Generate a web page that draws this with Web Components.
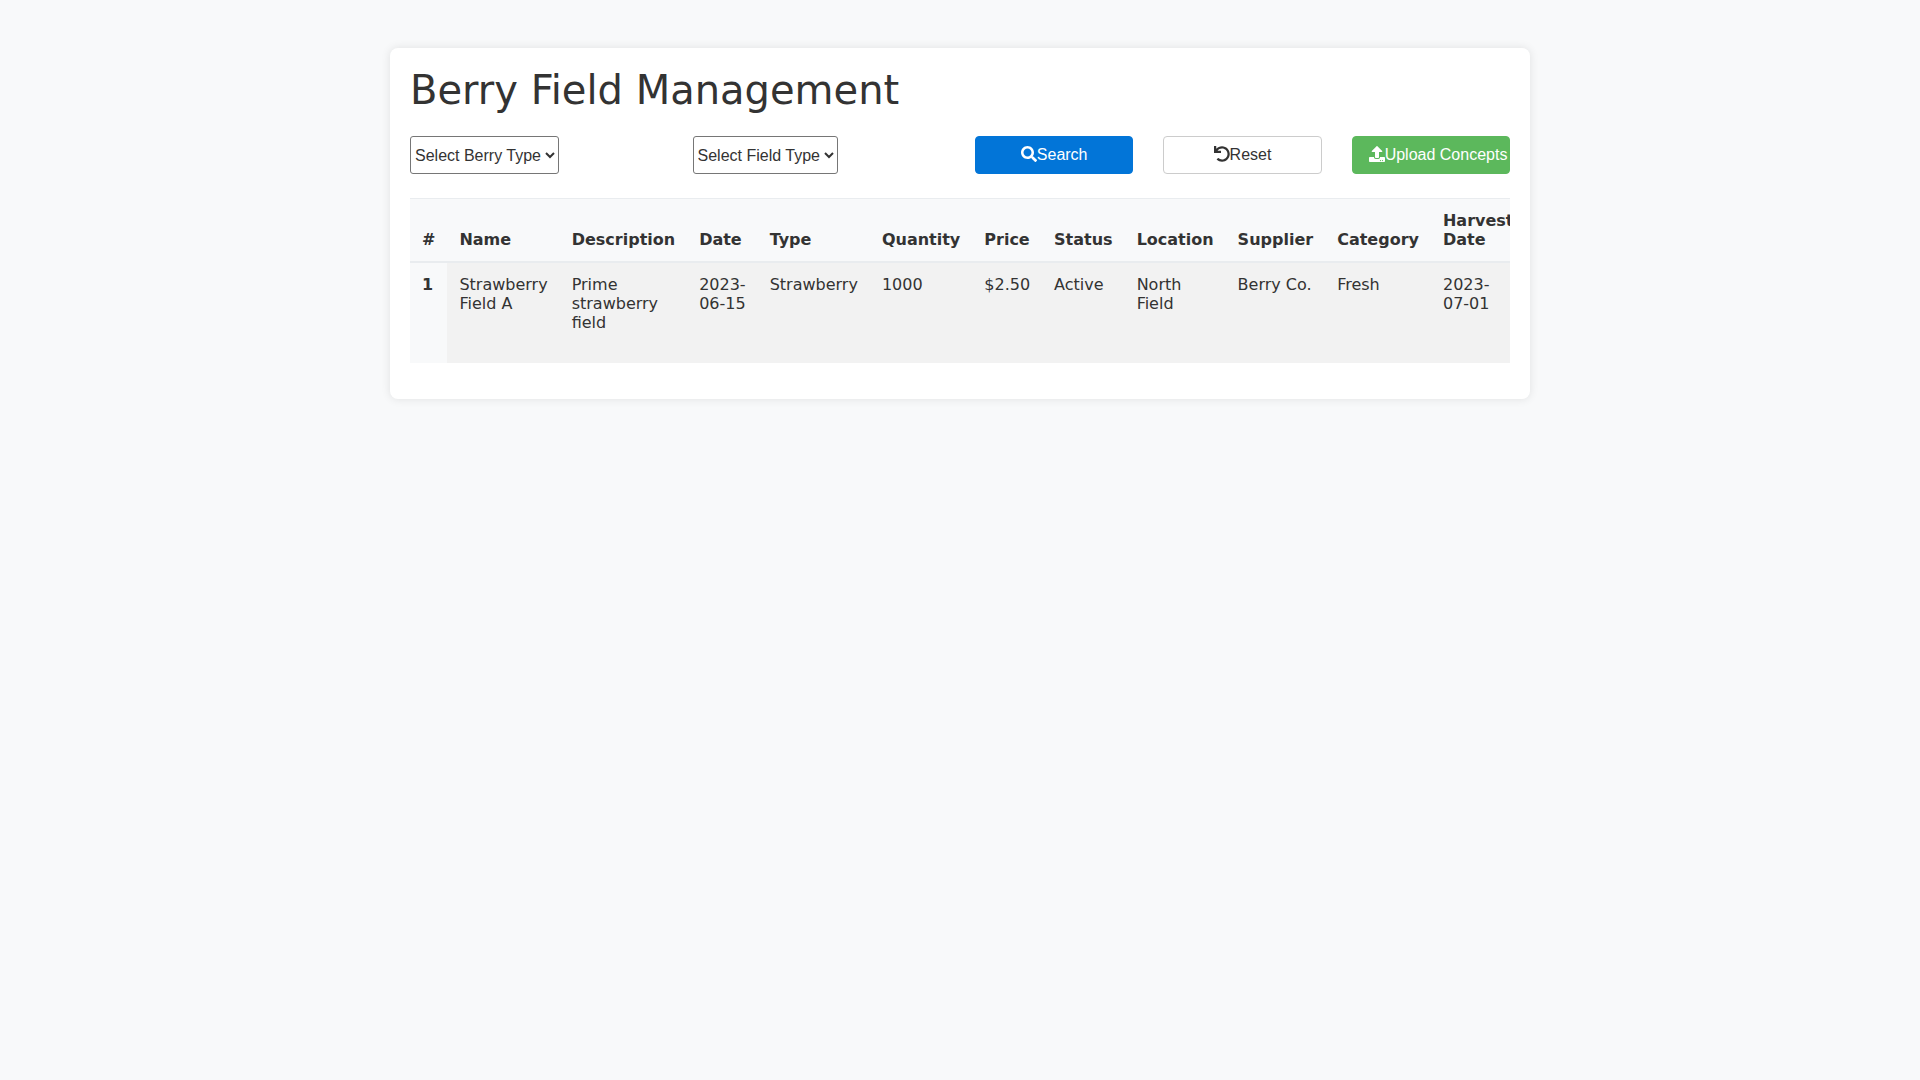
<!DOCTYPE html>
<html lang="en">
<head>
<meta charset="utf-8">
<title>Berry Field Management</title>
<style>
    html, body { margin: 0; padding: 0; }
    body {
        background: #f8f9fa;
        color: #333;
        font-family: "DejaVu Sans", sans-serif;
        font-size: 16px;
        min-height: 1080px;
    }
</style>
</head>
<body>
<field-page>
    <page-title>Berry Field Management</page-title>
    <filter-bar>
        <filter-select label="Select Berry Type"></filter-select>
        <filter-select label="Select Field Type"></filter-select>
        <action-button kind="primary" icon="search">Search</action-button>
        <action-button kind="plain" icon="undo">Reset</action-button>
        <action-button kind="success" icon="upload">Upload Concepts</action-button>
    </filter-bar>
    <field-table></field-table>
</field-page>

<script>
const ICONS = {
    search: { box: '0 0 512 512', d: 'M505 442.7L405.3 343c-4.5-4.5-10.6-7-17-7H372c27.6-35.3 44-79.7 44-128C416 93.1 322.9 0 208 0S0 93.1 0 208s93.1 208 208 208c48.3 0 92.7-16.4 128-44v16.3c0 6.4 2.5 12.5 7 17l99.7 99.7c9.4 9.4 24.6 9.4 33.9 0l28.3-28.3c9.4-9.4 9.4-24.6.1-34zM208 336c-70.7 0-128-57.2-128-128 0-70.7 57.2-128 128-128 70.7 0 128 57.2 128 128 0 70.7-57.2 128-128 128z' },
    undo: { box: '0 0 512 512', d: 'M212.333 224.333H12c-6.627 0-12-5.373-12-12V12C0 5.373 5.373 0 12 0h48c6.627 0 12 5.373 12 12v78.112C117.773 39.279 184.26 7.47 258.175 8.007c136.906.994 246.448 111.623 246.157 248.532C504.041 393.258 393.12 504 256.333 504c-64.089 0-122.496-24.313-166.51-64.215-5.099-4.622-5.334-12.554-.467-17.42l33.967-33.967c4.474-4.474 11.662-4.717 16.401-.525C170.76 415.336 211.58 432 256.333 432c97.268 0 176-78.716 176-176 0-97.267-78.716-176-176-176-58.496 0-110.28 28.476-142.274 72.333h98.274c6.627 0 12 5.373 12 12v48c0 6.627-5.373 12-12 12z' },
    upload: { box: '0 0 512 512', d: 'M296 384h-80c-13.3 0-24-10.7-24-24V192h-87.7c-17.8 0-26.7-21.5-14.1-34.1L242.3 5.7c7.5-7.5 19.8-7.5 27.3 0l152.2 152.2c12.6 12.6 3.7 34.1-14.1 34.1H320v168c0 13.3-10.7 24-24 24zm216-8v112c0 13.3-10.7 24-24 24H24c-13.3 0-24-10.7-24-24V376c0-13.3 10.7-24 24-24h136v8c0 30.9 25.1 56 56 56h80c30.9 0 56-25.1 56-56v-8h136c13.3 0 24 10.7 24 24zm-124 88c0-11-9-20-20-20s-20 9-20 20 9 20 20 20 20-9 20-20zm64 0c0-11-9-20-20-20s-20 9-20 20 9 20 20 20 20-9 20-20z' }
};

class FieldPage extends HTMLElement {
    connectedCallback() {
        this.attachShadow({ mode: 'open' });
        this.shadowRoot.innerHTML = `
            <style>
                :host {
                    display: block;
                    box-sizing: border-box;
                    width: 1140px;
                    margin: 48px auto 0;
                    padding: 20px;
                    background: white;
                    border-radius: 8px;
                    box-shadow: 0 0 10px rgba(0, 0, 0, 0.1);
                }
            </style>
            <slot></slot>
        `;
    }
}

class PageTitle extends HTMLElement {
    connectedCallback() {
        this.attachShadow({ mode: 'open' });
        this.shadowRoot.innerHTML = `
            <style>
                :host {
                    display: block;
                    font-size: 40px;
                    font-weight: 500;
                    line-height: 44px;
                    margin-bottom: 24px;
                }
            </style>
            <slot></slot>
        `;
    }
}

class FilterBar extends HTMLElement {
    connectedCallback() {
        this.attachShadow({ mode: 'open' });
        this.shadowRoot.innerHTML = `
            <style>
                :host {
                    display: grid;
                    grid-template-columns: repeat(12, 1fr);
                    column-gap: 30px;
                    margin-bottom: 24px;
                }
                ::slotted(filter-select) { grid-column: span 3; }
                ::slotted(action-button) { grid-column: span 2; }
            </style>
            <slot></slot>
        `;
    }
}

class FilterSelect extends HTMLElement {
    connectedCallback() {
        const label = this.getAttribute('label') || 'Select';
        this.attachShadow({ mode: 'open' });
        this.shadowRoot.innerHTML = `
            <style>
                :host { display: block; }
                select {
                    display: block;
                    height: 38px;
                    padding: 0;
                    border: 1px solid #767676;
                    border-radius: 3px;
                    font-family: "Liberation Sans", Arial, sans-serif;
                    font-size: 16px;
                    color: #333;
                    background: white;
                }
            </style>
            <select><option>${label}</option></select>
        `;
    }
}

class ActionButton extends HTMLElement {
    connectedCallback() {
        const icon = ICONS[this.getAttribute('icon')] || ICONS.search;
        this.attachShadow({ mode: 'open' });
        this.shadowRoot.innerHTML = `
            <style>
                :host { display: block; min-width: 0; }
                .btn {
                    box-sizing: border-box;
                    height: 38px;
                    padding: 0 16px;
                    border: 1px solid transparent;
                    border-radius: 4px;
                    font-family: "Liberation Sans", Arial, sans-serif;
                    font-size: 16px;
                    line-height: 36px;
                    text-align: center;
                    white-space: nowrap;
                }
                .primary { background: #0275d8; color: white; border-color: #0275d8; }
                .plain { background: white; color: #333; border-color: #ccc; }
                .success { background: #5cb85c; color: white; border-color: #5cb85c; }
                svg {
                    width: 16px;
                    height: 16px;
                    fill: currentColor;
                    vertical-align: -0.125em;
                }
            </style>
            <div class="btn ${this.getAttribute('kind') || 'plain'}" role="button">
                <svg viewBox="${icon.box}"><path d="${icon.d}"/></svg><slot></slot>
            </div>
        `;
    }
}

class FieldTable extends HTMLElement {
    connectedCallback() {
        const heads = ['#', 'Name', 'Description', 'Date', 'Type', 'Quantity', 'Price', 'Status', 'Location', 'Supplier', 'Category', 'Harvest Date'];
        const row = ['Strawberry Field A', 'Prime strawberry field', '2023-06-15', 'Strawberry', '1000', '$2.50', 'Active', 'North Field', 'Berry Co.', 'Fresh', '2023-07-01'];
        this.attachShadow({ mode: 'open' });
        this.shadowRoot.innerHTML = `
            <style>
                :host {
                    display: block;
                    overflow: hidden;
                    margin-bottom: 16px;
                }
                table {
                    width: 100%;
                    border-collapse: collapse;
                    color: #333;
                }
                th, td {
                    padding: 12px;
                    text-align: left;
                    vertical-align: top;
                }
                thead th {
                    background: #f8f9fa;
                    vertical-align: bottom;
                    border-top: 1px solid #e9ecef;
                    border-bottom: 2px solid #e9ecef;
                }
                tbody tr { height: 101px; }
                tbody th { background: #f8f9fa; }
                tbody td { background: #f2f2f2; }
            </style>
            <table>
                <thead><tr>${heads.map(h => `<th>${h}</th>`).join('')}</tr></thead>
                <tbody><tr><th>1</th>${row.map(c => `<td>${c}</td>`).join('')}</tr></tbody>
            </table>
        `;
    }
}

customElements.define('field-page', FieldPage);
customElements.define('page-title', PageTitle);
customElements.define('filter-bar', FilterBar);
customElements.define('filter-select', FilterSelect);
customElements.define('action-button', ActionButton);
customElements.define('field-table', FieldTable);
</script>
</body>
</html>
